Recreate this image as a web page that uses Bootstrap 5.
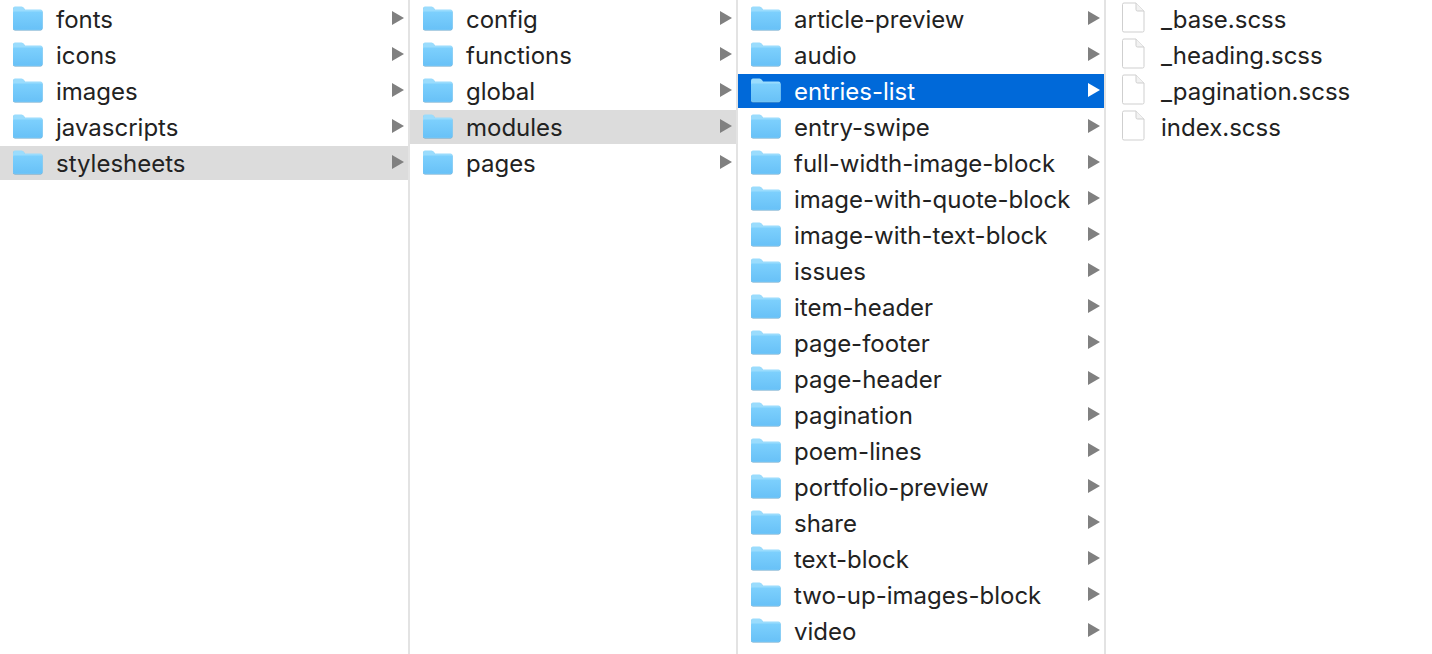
<!DOCTYPE html>
<html lang="en"><head><meta charset="utf-8"><title>Finder</title>
<link href="https://cdn.jsdelivr.net/npm/bootstrap@5.3.0/dist/css/bootstrap.min.css" rel="stylesheet">
<style>
html,body{height:654px;overflow:hidden;background:#fff}
body{font-family:Inter,Roboto,"Liberation Sans",sans-serif;font-size:24px;color:#222}
.pane{height:654px;border-right:2px solid #e3e3e3;padding-top:2px;flex:none}
.p1{width:410px}.p2{width:328px}.p3{width:368px}.p4{flex:1;border-right:0}
.entry{height:34px;margin-bottom:2px;padding-left:12px}
.entry.dim{background:#dcdcdc}
.entry.sel{background:#0069d9;color:#fff}
.fold{width:31px;height:26px;flex:none;margin:0 13px 3px 0}
.doc{width:24px;height:31px;flex:none;margin:0 16px 3px 3px}
.lbl{flex:1;white-space:nowrap;padding-top:1px}
.tri{width:14px;height:16px;flex:none;margin:0 3px 2px 0;color:#808080}
.sel .tri{color:#fff}
</style></head><body>
<svg width="0" height="0" class="d-block"><defs>
<linearGradient id="g" x1="0" y1="0" x2="0" y2="1"><stop offset="0" stop-color="#7dd0fd"/><stop offset="1" stop-color="#68c1f7"/></linearGradient>
<symbol id="f" viewBox="0 0 31 26"><path d="M1 4.500Q1 2 3 2H9.500Q11 2 12 3.500L13 5H28.500Q30.500 5 30.500 7V23.500Q30.500 25.500 28.500 25.500H3Q1 25.500 1 23.500Z" fill="#5f9fc8"/><path d="M1 4.500Q1 1.500 3 1.500H9.500Q11 1.500 12 3L13 4.500H28.500Q30.500 4.500 30.500 6.500V23Q30.500 24.800 28.500 24.800H3Q1 24.800 1 23Z" fill="#9adcfd"/><path d="M1 7.500Q1 6.500 2 6.500H29.500Q30.500 6.500 30.500 7.500V23Q30.500 24.800 28.500 24.800H3Q1 24.800 1 23Z" fill="url(#g)"/></symbol>
<symbol id="d" viewBox="0 0 24 31"><path d="M1.500 2.500Q1.500 1 3 1H15L23 9V28.500Q23 30 21.500 30H3Q1.500 30 1.500 28.500Z" fill="#fff" stroke="#cfcfcf"/><path d="M15 1V7.500Q15 9 16.500 9H23" fill="#f2f2f2" stroke="#cfcfcf"/></symbol>
<symbol id="t" viewBox="0 0 14 16"><path d="M1 1L13 8L1 15Z" fill="currentColor"/></symbol>
</defs></svg>
<div class="d-flex">
<div class="pane p1">
<div class="entry d-flex align-items-center"><svg class="fold"><use href="#f"/></svg><span class="lbl">fonts</span><svg class="tri"><use href="#t"/></svg></div>
<div class="entry d-flex align-items-center"><svg class="fold"><use href="#f"/></svg><span class="lbl">icons</span><svg class="tri"><use href="#t"/></svg></div>
<div class="entry d-flex align-items-center"><svg class="fold"><use href="#f"/></svg><span class="lbl">images</span><svg class="tri"><use href="#t"/></svg></div>
<div class="entry d-flex align-items-center"><svg class="fold"><use href="#f"/></svg><span class="lbl">javascripts</span><svg class="tri"><use href="#t"/></svg></div>
<div class="entry dim d-flex align-items-center"><svg class="fold"><use href="#f"/></svg><span class="lbl">stylesheets</span><svg class="tri"><use href="#t"/></svg></div>
</div>
<div class="pane p2">
<div class="entry d-flex align-items-center"><svg class="fold"><use href="#f"/></svg><span class="lbl">config</span><svg class="tri"><use href="#t"/></svg></div>
<div class="entry d-flex align-items-center"><svg class="fold"><use href="#f"/></svg><span class="lbl">functions</span><svg class="tri"><use href="#t"/></svg></div>
<div class="entry d-flex align-items-center"><svg class="fold"><use href="#f"/></svg><span class="lbl">global</span><svg class="tri"><use href="#t"/></svg></div>
<div class="entry dim d-flex align-items-center"><svg class="fold"><use href="#f"/></svg><span class="lbl">modules</span><svg class="tri"><use href="#t"/></svg></div>
<div class="entry d-flex align-items-center"><svg class="fold"><use href="#f"/></svg><span class="lbl">pages</span><svg class="tri"><use href="#t"/></svg></div>
</div>
<div class="pane p3">
<div class="entry d-flex align-items-center"><svg class="fold"><use href="#f"/></svg><span class="lbl">article-preview</span><svg class="tri"><use href="#t"/></svg></div>
<div class="entry d-flex align-items-center"><svg class="fold"><use href="#f"/></svg><span class="lbl">audio</span><svg class="tri"><use href="#t"/></svg></div>
<div class="entry sel d-flex align-items-center"><svg class="fold"><use href="#f"/></svg><span class="lbl">entries-list</span><svg class="tri"><use href="#t"/></svg></div>
<div class="entry d-flex align-items-center"><svg class="fold"><use href="#f"/></svg><span class="lbl">entry-swipe</span><svg class="tri"><use href="#t"/></svg></div>
<div class="entry d-flex align-items-center"><svg class="fold"><use href="#f"/></svg><span class="lbl">full-width-image-block</span><svg class="tri"><use href="#t"/></svg></div>
<div class="entry d-flex align-items-center"><svg class="fold"><use href="#f"/></svg><span class="lbl">image-with-quote-block</span><svg class="tri"><use href="#t"/></svg></div>
<div class="entry d-flex align-items-center"><svg class="fold"><use href="#f"/></svg><span class="lbl">image-with-text-block</span><svg class="tri"><use href="#t"/></svg></div>
<div class="entry d-flex align-items-center"><svg class="fold"><use href="#f"/></svg><span class="lbl">issues</span><svg class="tri"><use href="#t"/></svg></div>
<div class="entry d-flex align-items-center"><svg class="fold"><use href="#f"/></svg><span class="lbl">item-header</span><svg class="tri"><use href="#t"/></svg></div>
<div class="entry d-flex align-items-center"><svg class="fold"><use href="#f"/></svg><span class="lbl">page-footer</span><svg class="tri"><use href="#t"/></svg></div>
<div class="entry d-flex align-items-center"><svg class="fold"><use href="#f"/></svg><span class="lbl">page-header</span><svg class="tri"><use href="#t"/></svg></div>
<div class="entry d-flex align-items-center"><svg class="fold"><use href="#f"/></svg><span class="lbl">pagination</span><svg class="tri"><use href="#t"/></svg></div>
<div class="entry d-flex align-items-center"><svg class="fold"><use href="#f"/></svg><span class="lbl">poem-lines</span><svg class="tri"><use href="#t"/></svg></div>
<div class="entry d-flex align-items-center"><svg class="fold"><use href="#f"/></svg><span class="lbl">portfolio-preview</span><svg class="tri"><use href="#t"/></svg></div>
<div class="entry d-flex align-items-center"><svg class="fold"><use href="#f"/></svg><span class="lbl">share</span><svg class="tri"><use href="#t"/></svg></div>
<div class="entry d-flex align-items-center"><svg class="fold"><use href="#f"/></svg><span class="lbl">text-block</span><svg class="tri"><use href="#t"/></svg></div>
<div class="entry d-flex align-items-center"><svg class="fold"><use href="#f"/></svg><span class="lbl">two-up-images-block</span><svg class="tri"><use href="#t"/></svg></div>
<div class="entry d-flex align-items-center"><svg class="fold"><use href="#f"/></svg><span class="lbl">video</span><svg class="tri"><use href="#t"/></svg></div>
</div>
<div class="pane p4">
<div class="entry d-flex align-items-center"><svg class="doc"><use href="#d"/></svg><span class="lbl">_base.scss</span></div>
<div class="entry d-flex align-items-center"><svg class="doc"><use href="#d"/></svg><span class="lbl">_heading.scss</span></div>
<div class="entry d-flex align-items-center"><svg class="doc"><use href="#d"/></svg><span class="lbl">_pagination.scss</span></div>
<div class="entry d-flex align-items-center"><svg class="doc"><use href="#d"/></svg><span class="lbl">index.scss</span></div>
</div>
</div>
</body></html>
